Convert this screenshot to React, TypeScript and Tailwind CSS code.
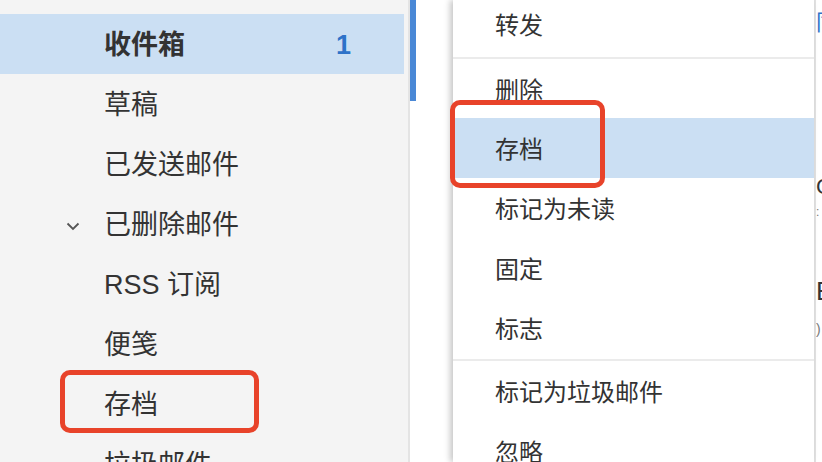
import React from "react";

const CJK = "font-['Liberation_Sans','Noto_Sans_CJK_SC',sans-serif]";

type Folder = { name: string; count?: number; selected?: boolean; chevron?: boolean };

const folders: Folder[] = [
  { name: "收件箱", count: 1, selected: true },
  { name: "草稿" },
  { name: "已发送邮件" },
  { name: "已删除邮件", chevron: true },
  { name: "RSS 订阅" },
  { name: "便笺" },
  { name: "存档" },
  { name: "垃圾邮件" },
];

function Chevron() {
  return (
    <svg width="16" height="16" viewBox="0 0 16 16" className="text-[#555]">
      <path d="M2.5 5.5 L8 11 L13.5 5.5" fill="none" stroke="currentColor" strokeWidth="1.8" />
    </svg>
  );
}

function Sidebar() {
  return (
    <div className="flex h-full w-[408px] shrink-0 flex-col bg-[#f4f4f4] pt-[14px]">
      {folders.map((f) => (
        <div
          key={f.name}
          className={`flex h-[60px] w-[404px] shrink-0 items-center pt-[3px] ${f.selected ? "bg-[#cbdff3]" : ""}`}
        >
          <div className="flex w-[104px] shrink-0 items-center justify-end pr-[23px]">
            {f.chevron && <Chevron />}
          </div>
          <span
            className={`flex-1 text-[27px] leading-none text-[#333] ${f.selected ? "font-bold" : ""}`}
          >
            {f.name}
          </span>
          {f.count !== undefined && (
            <span className="mr-[53px] text-[27px] font-semibold leading-none text-[#2e72c8]">
              {f.count}
            </span>
          )}
        </div>
      ))}
    </div>
  );
}

type Item = { label: string; highlight?: boolean; sepAfter?: boolean };

const items: Item[] = [
  { label: "转发", sepAfter: true },
  { label: "删除" },
  { label: "存档", highlight: true },
  { label: "标记为未读" },
  { label: "固定" },
  { label: "标志", sepAfter: true },
  { label: "标记为垃圾邮件" },
  { label: "忽略" },
];

function Menu() {
  return (
    <div className="relative z-10 flex h-full w-[361px] shrink-0 flex-col bg-white shadow-[-3px_0_6px_rgba(0,0,0,0.22)]">
      <div className="-mt-[6px] flex flex-col">
        {items.map((it, i) => (
          <React.Fragment key={it.label}>
            <div
              className={`flex shrink-0 items-center pl-[42px] pt-[4px] text-[24px] leading-none text-[#333] ${
                i === 1 ? "h-[59px]" : "h-[60px]"
              } ${it.highlight ? "bg-[#cbdff3]" : ""}`}
            >
              {it.label}
            </div>
            {it.sepAfter && (
              <div className={`${i === 0 ? "mt-[3px]" : "mt-[1px]"} h-[2px] shrink-0 bg-[#ebebeb]`} />
            )}
          </React.Fragment>
        ))}
      </div>
    </div>
  );
}

export default function App() {
  return (
    <div className={`relative flex h-[462px] w-[822px] overflow-hidden bg-white ${CJK}`}>
      <Sidebar />
      <div className="h-full w-[2px] shrink-0 bg-[#e4e4e4]" />
      <div className="flex h-full w-[43px] shrink-0 flex-col bg-white">
        <div className="h-[101px] w-[6px] bg-[#4a88d6]" />
      </div>
      <Menu />
      <div className="h-full w-[2px] shrink-0 bg-[#e2e2e2]" />
      <div className="flex h-full flex-1 flex-col overflow-hidden bg-white text-[22px] leading-none text-[#333]">
        <span className="mt-[12px] text-[#2e72c8]">同</span>
        <span className="mt-[142px]">C</span>
        <span className="mt-[8px] text-[12px] text-[#777]">:</span>
        <span className="mt-[60px] text-[26px]">E</span>
        <span className="mt-[18px] text-[14px] text-[#777]">)</span>
      </div>

      <div className="pointer-events-none absolute left-[60px] top-[370px] h-[63px] w-[199px] rounded-[10px] border-[5px] border-[#e8432a]" />
      <div className="pointer-events-none absolute left-[450px] top-[100px] z-20 h-[88px] w-[155px] rounded-[10px] border-[5px] border-[#e8432a]" />
    </div>
  );
}
